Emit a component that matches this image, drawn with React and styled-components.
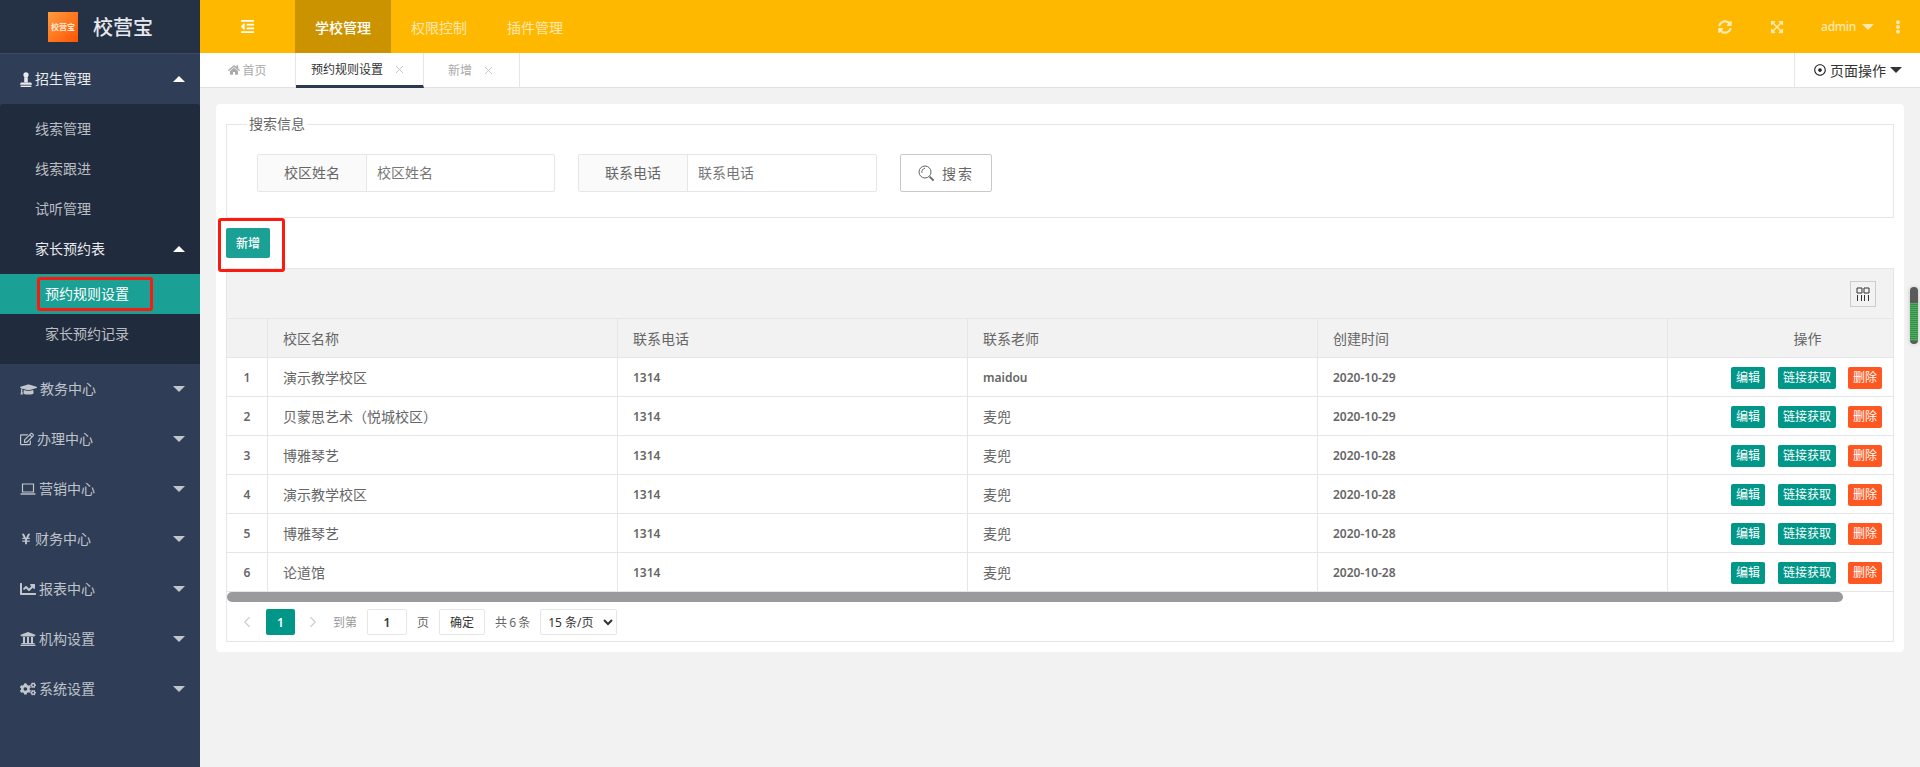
import React from 'react'
import styled, { createGlobalStyle } from 'styled-components'
import {
  FaHome, FaGraduationCap, FaRegEdit, FaYenSign, FaChartLine, FaUniversity, FaCogs,
  FaSyncAlt, FaExpandArrowsAlt, FaEllipsisV, FaRegDotCircle, FaOutdent
} from 'react-icons/fa'
import { X, ChevronLeft, ChevronRight } from 'lucide-react'

const GlobalStyle = createGlobalStyle`
  html, body, #root {
    height: 100%;
    margin: 0;
  }
  body {
    overflow: hidden;
    background: #f2f2f2;
    font-family: "Noto Sans", "Noto Sans CJK SC", sans-serif;
    color: #666;
  }
  * {
    box-sizing: border-box;
  }
`

const Page = styled.div`
  position: relative;
  display: flex;
  height: 100%;
`

const Sidebar = styled.aside`
  width: 200px;
  flex: none;
  background: #2f3e56;
`

const Brand = styled.div`
  display: flex;
  align-items: center;
  height: 54px;
  padding-left: 48px;
  background: #253145;
  border-bottom: 1px solid #3d4a5f;
`

const BrandLogo = styled.div`
  display: flex;
  align-items: center;
  justify-content: center;
  width: 30px;
  height: 30px;
  background: linear-gradient(135deg, #ff9c40, #ff5400);
  color: #ffe9d8;
  font-size: 8px;
  font-weight: 700;
  white-space: nowrap;
`

const BrandName = styled.div`
  margin-left: 15px;
  color: #e6e8ec;
  font-size: 20px;
  font-weight: 500;
`

const MenuRow = styled.div`
  display: flex;
  align-items: center;
  height: ${props => props.small ? 40 : 50}px;
  padding: 0 15px 2px ${props => props.small ? 35 : 20}px;
  color: ${props => props.open ? '#e8eaee' : 'rgba(255, 255, 255, .7)'};
  font-size: 14px;
`

const MenuIcon = styled.span`
  display: inline-flex;
  align-items: center;
  margin: 2px 3px 0 0;
  font-size: 15px;
`

const Caret = styled.span`
  margin-left: auto;
  width: 0;
  height: 0;
  border-left: 6px solid transparent;
  border-right: 6px solid transparent;
  border-top: ${props => props.up ? 0 : `6px solid ${props.color || 'rgba(255, 255, 255, .7)'}`};
  border-bottom: ${props => props.up ? `6px solid ${props.color || '#fff'}` : 0};
`

const MenuCaret = styled(Caret)`
  margin-top: 2px;
`

const SubMenu = styled.div`
  padding: 5px 0;
  background: #202b3d;
  border-radius: 3px 3px 0 0;
`

const SubSubMenu = styled.div`
  padding: 5px 0;
`

const SubSubItem = styled.div`
  position: relative;
  display: flex;
  align-items: center;
  height: 40px;
  padding: 0 0 2px 45px;
  font-size: 14px;
  background: ${props => props.active ? '#1aa094' : 'transparent'};
  color: ${props => props.active ? '#fff' : 'rgba(255, 255, 255, .7)'};
`

const Highlight = styled.span`
  position: absolute;
  border: 3px solid #fb1a10;
  border-radius: 3px;
  pointer-events: none;
`

const MenuMark = styled(Highlight)`
  left: 37px;
  top: 3px;
  width: 116px;
  height: 34px;
`

const AddMark = styled(Highlight)`
  left: -8px;
  top: -10px;
  width: 67px;
  height: 54px;
`

const Main = styled.main`
  flex: 1;
  min-width: 0;
  display: flex;
  flex-direction: column;
`

const TopBar = styled.header`
  display: flex;
  align-items: center;
  height: 53px;
  flex: none;
  background: #ffb800;
`

const Collapse = styled.div`
  display: flex;
  justify-content: center;
  width: 95px;
  color: #fff;
  font-size: 15px;
`

const TopLink = styled.div`
  display: flex;
  align-items: center;
  justify-content: center;
  width: 96px;
  height: 100%;
  font-size: 14px;
  font-weight: ${props => props.active ? 500 : 400};
  background: ${props => props.active ? '#cc9300' : 'transparent'};
  color: ${props => props.active ? '#fff' : 'rgba(255, 255, 255, .7)'};
`

const TopTools = styled.div`
  display: flex;
  align-items: center;
  margin-left: auto;
  color: rgba(255, 255, 255, .7);
`

const TopTool = styled.span`
  display: inline-flex;
  justify-content: center;
  width: ${props => props.width}px;
  font-size: 14px;
`

const UserName = styled.span`
  display: flex;
  align-items: center;
  gap: 6px;
  margin-left: auto;
  padding-right: 2px;
  font-size: 12px;
  font-weight: 500;
  letter-spacing: -.3px;
`

const TabBar = styled.div`
  display: flex;
  height: 35px;
  flex: none;
  background: #fff;
  border-bottom: 1px solid #e2e2e2;
`

const HomeTab = styled.div`
  display: flex;
  align-items: center;
  justify-content: center;
  gap: 2px;
  width: 96px;
  font-size: 12px;
  color: #aaa;
  border-right: 1px solid #e6e6e6;
`

const Tab = styled.div`
  display: flex;
  align-items: center;
  gap: 10px;
  margin-bottom: -1px;
  width: ${props => props.width}px;
  padding-left: ${props => props.active ? 15 : 24}px;
  font-size: 12px;
  color: ${props => props.active ? '#333' : '#aaa'};
  border-right: 1px solid #e6e6e6;
  border-bottom: ${props => props.active ? '3px solid #2b384e' : '1px solid #e2e2e2'};
  svg {
    color: #bbb;
  }
`

const PageAction = styled.div`
  display: flex;
  align-items: center;
  margin-left: auto;
  width: 126px;
  padding-left: 19px;
  font-size: 14px;
  color: #333;
  border-left: 1px solid #e6e6e6;
  svg {
    margin-right: 4px;
    color: #222;
  }
`

const ActionCaret = styled(Caret)`
  margin-left: 4px;
`

const Content = styled.div`
  padding: 16px 16px 0;
`

const Card = styled.section`
  padding: 10px;
  background: #fff;
  border-radius: 4px;
`

const Fieldset = styled.fieldset`
  margin: 0 0 10px;
  padding: 20px 30px 25px;
  border: 1px solid #e6e6e6;
`

const Legend = styled.legend`
  margin-left: -10px;
  padding: 0 2px;
  font-size: 14px;
  line-height: 20px;
  color: #666;
`

const SearchRow = styled.div`
  display: flex;
  align-items: center;
`

const InputGroup = styled.div`
  display: flex;
  width: ${props => props.width}px;
  height: 38px;
  margin-right: 23px;
  font-size: 14px;
  border: 1px solid #e6e6e6;
  border-radius: 2px;
`

const InputLabel = styled.div`
  display: flex;
  align-items: center;
  justify-content: center;
  width: 109px;
  padding-bottom: 2px;
  background: #fafafa;
  border-right: 1px solid #e6e6e6;
`

const InputValue = styled.div`
  display: flex;
  align-items: center;
  padding: 0 0 2px 10px;
  color: #777;
`

const SearchButton = styled.button`
  display: flex;
  align-items: center;
  justify-content: center;
  gap: 7px;
  width: 92px;
  height: 38px;
  padding: 0;
  font: inherit;
  font-size: 14px;
  letter-spacing: 2px;
  color: #666;
  background: #fff;
  border: 1px solid #c9c9c9;
  border-radius: 2px;
`

const AddRow = styled.div`
  position: relative;
  width: 44px;
  margin-bottom: 10px;
`

const AddButton = styled.button`
  display: block;
  width: 44px;
  height: 30px;
  padding: 0;
  font: inherit;
  font-size: 12px;
  font-weight: 500;
  color: #fff;
  background: #1aa094;
  border: 0;
  border-radius: 2px;
`

const Panel = styled.div`
  border: 1px solid #e6e6e6;
`

const PanelTools = styled.div`
  display: flex;
  align-items: center;
  justify-content: flex-end;
  height: 50px;
  padding-right: 17px;
  background: #f2f2f2;
  border-bottom: 1px solid #e6e6e6;
`

const ColsButton = styled.div`
  display: flex;
  align-items: center;
  justify-content: center;
  width: 26px;
  height: 26px;
  border: 1px solid #ccc;
`

const Table = styled.table`
  width: 1666px;
  table-layout: fixed;
  border-collapse: separate;
  border-spacing: 0;
`

const Th = styled.th`
  height: 39px;
  padding: ${props => props.center ? '0 0 0 54px' : '0 15px'};
  font-size: 14px;
  font-weight: 400;
  color: #666;
  text-align: ${props => props.center ? 'center' : 'left'};
  background: #f2f2f2;
  border-right: 1px solid #e6e6e6;
  border-bottom: 1px solid #e6e6e6;
  &:last-child {
    border-right: 0;
  }
`

const Td = styled.td`
  height: 39px;
  padding: 0 15px;
  font-size: ${props => props.strong ? 12 : 14}px;
  font-weight: ${props => props.strong ? 600 : 400};
  color: #666;
  text-align: ${props => props.center ? 'center' : 'left'};
  border-right: 1px solid #e6e6e6;
  border-bottom: 1px solid #e6e6e6;
  &:last-child {
    border-right: 0;
    padding: 0 11px 0 0;
  }
`

const RowActions = styled.div`
  display: flex;
  justify-content: flex-end;
  gap: 12px;
  padding-top: 2px;
`

const RowButton = styled.button`
  height: 22px;
  padding: 0 5px;
  font: inherit;
  font-size: 12px;
  line-height: 22px;
  color: #fff;
  background: ${props => props.danger ? '#ff5722' : '#009688'};
  border: 0;
  border-radius: 2px;
  &:first-child {
    margin-right: 1px;
  }
`

const ScrollTrack = styled.div`
  height: 10px;
  background: #fff;
`

const ScrollThumb = styled.div`
  width: 1616px;
  height: 100%;
  background: #9a9a9d;
  border-radius: 5px;
`

const Pager = styled.div`
  display: flex;
  align-items: center;
  height: 39px;
  padding: 1px 0 0 11px;
  font-size: 12px;
  color: #777;
`

const PagerArrow = styled.span`
  display: inline-flex;
  justify-content: center;
  width: 18px;
  color: #ccc;
`

const PagerCurrent = styled.span`
  display: flex;
  align-items: center;
  justify-content: center;
  width: 29px;
  height: 26px;
  margin: 0 9px 0 10px;
  font-weight: 600;
  color: #fff;
  background: #009688;
  border-radius: 2px;
`

const PagerText = styled.span`
  margin: ${props => props.margin || '0'};
  color: ${props => props.muted ? '#999' : '#666'};
  white-space: nowrap;
  word-spacing: -1px;
`

const PagerBox = styled.span`
  display: flex;
  align-items: center;
  justify-content: center;
  width: ${props => props.width}px;
  height: 26px;
  font-weight: ${props => props.strong ? 600 : 400};
  color: #333;
  border: 1px solid #e6e6e6;
  border-radius: 2px;
`

const PageSize = styled.select`
  width: 77px;
  height: 26px;
  padding: 0 0 0 3px;
  font: inherit;
  font-size: 12px;
  color: #333;
  background: #fff;
  border: 1px solid #e6e6e6;
  border-radius: 2px;
`

const PageScroll = styled.div`
  position: absolute;
  top: 287px;
  right: 2px;
  width: 8px;
  height: 57px;
  background:
    repeating-linear-gradient(#4cae5f 0 1px, #3c8a4c 1px 2px) 0 16px / 100% 38px no-repeat,
    #5a5a5a;
  border-radius: 4px;
  box-shadow: 0 0 4px rgba(0, 0, 0, .2);
`

const StampIcon = () => (
  <svg width='12' height='15' viewBox='0 0 12 15' fill='currentColor'>
    <circle cx='6' cy='2.8' r='2.6' />
    <path d='M4.2 5.2h3.6v5.3H4.2z' />
    <path d='M1.6 10.5h8.8c.8 0 1.4.6 1.4 1.4v.9H.2v-.9c0-.8.6-1.4 1.4-1.4z' />
    <path d='M.6 13.6h10.8V15H.6z' />
  </svg>
)

const LaptopIcon = () => (
  <svg width='16' height='12' viewBox='0 0 16 12' fill='none' stroke='currentColor' strokeWidth='1.2'>
    <path d='M2.5 1h11v8h-11z' />
    <path d='M.5 11h15' strokeWidth='1.4' />
  </svg>
)

const SearchIcon = () => (
  <svg width='17' height='17' viewBox='0 0 17 17' fill='none' stroke='#666' strokeWidth='1'>
    <circle cx='7' cy='7' r='6' />
    <path d='M7 3.2A3.8 3.8 0 0 0 4 8' />
    <path d='M11.6 11.6l4 4' strokeWidth='1.8' />
  </svg>
)

const ColsIcon = () => (
  <svg width='14' height='14' viewBox='0 0 14 14' fill='none' stroke='#333' strokeWidth='1'>
    <path d='M1 1h5v5H1zM8 1h5v5H8z' />
    <path d='M1.5 8v6M5.5 8v6M8.5 8v6M12.5 8v6' />
  </svg>
)

const menus = [
  { name: '教务中心', icon: <FaGraduationCap size={17} /> },
  { name: '办理中心', icon: <FaRegEdit size={14} /> },
  { name: '营销中心', icon: <LaptopIcon /> },
  { name: '财务中心', icon: <FaYenSign size={12} /> },
  { name: '报表中心', icon: <FaChartLine size={16} /> },
  { name: '机构设置', icon: <FaUniversity size={16} /> },
  { name: '系统设置', icon: <FaCogs size={16} /> }
]

const rows = [
  ['演示教学校区', '1314', 'maidou', '2020-10-29'],
  ['贝蒙思艺术（悦城校区）', '1314', '麦兜', '2020-10-29'],
  ['博雅琴艺', '1314', '麦兜', '2020-10-28'],
  ['演示教学校区', '1314', '麦兜', '2020-10-28'],
  ['博雅琴艺', '1314', '麦兜', '2020-10-28'],
  ['论道馆', '1314', '麦兜', '2020-10-28']
]

const App = () => (
  <Page>
    <GlobalStyle />
    <Sidebar>
      <Brand>
        <BrandLogo>校营宝</BrandLogo>
        <BrandName>校营宝</BrandName>
      </Brand>
      <MenuRow open>
        <MenuIcon><StampIcon /></MenuIcon>
        招生管理
        <MenuCaret up />
      </MenuRow>
      <SubMenu>
        <MenuRow small>线索管理</MenuRow>
        <MenuRow small>线索跟进</MenuRow>
        <MenuRow small>试听管理</MenuRow>
        <MenuRow small open>
          家长预约表
          <MenuCaret up />
        </MenuRow>
        <SubSubMenu>
          <SubSubItem active>
            预约规则设置
            <MenuMark />
          </SubSubItem>
          <SubSubItem>家长预约记录</SubSubItem>
        </SubSubMenu>
      </SubMenu>
      {menus.map(menu => (
        <MenuRow key={menu.name}>
          <MenuIcon>{menu.icon}</MenuIcon>
          {menu.name}
          <MenuCaret />
        </MenuRow>
      ))}
    </Sidebar>
    <Main>
      <TopBar>
        <Collapse><FaOutdent /></Collapse>
        <TopLink active>学校管理</TopLink>
        <TopLink>权限控制</TopLink>
        <TopLink>插件管理</TopLink>
        <TopTools>
          <TopTool width={52}><FaSyncAlt /></TopTool>
          <TopTool width={52}><FaExpandArrowsAlt /></TopTool>
          <TopTool width={73}>
            <UserName>admin <Caret color='rgba(255, 255, 255, .7)' /></UserName>
          </TopTool>
          <TopTool width={44}><FaEllipsisV /></TopTool>
        </TopTools>
      </TopBar>
      <TabBar>
        <HomeTab><FaHome size={12} />首页</HomeTab>
        <Tab active width={128}>预约规则设置<X size={13} strokeWidth={1.5} /></Tab>
        <Tab width={96}>新增<X size={13} strokeWidth={1.5} /></Tab>
        <PageAction>
          <FaRegDotCircle size={12} />
          页面操作
          <ActionCaret color='#333' />
        </PageAction>
      </TabBar>
      <Content>
        <Card>
          <Fieldset>
            <Legend>搜索信息</Legend>
            <SearchRow>
              <InputGroup width={298}>
                <InputLabel>校区姓名</InputLabel>
                <InputValue>校区姓名</InputValue>
              </InputGroup>
              <InputGroup width={299}>
                <InputLabel>联系电话</InputLabel>
                <InputValue>联系电话</InputValue>
              </InputGroup>
              <SearchButton><SearchIcon />搜索</SearchButton>
            </SearchRow>
          </Fieldset>
          <AddRow>
            <AddButton>新增</AddButton>
            <AddMark />
          </AddRow>
          <Panel>
            <PanelTools>
              <ColsButton><ColsIcon /></ColsButton>
            </PanelTools>
            <Table>
              <colgroup>
                <col width='41' />
                <col width='350' />
                <col width='350' />
                <col width='350' />
                <col width='350' />
                <col width='225' />
              </colgroup>
              <thead>
                <tr>
                  <Th />
                  <Th>校区名称</Th>
                  <Th>联系电话</Th>
                  <Th>联系老师</Th>
                  <Th>创建时间</Th>
                  <Th center>操作</Th>
                </tr>
              </thead>
              <tbody>
                {rows.map((row, i) => (
                  <tr key={i}>
                    <Td center strong>{i + 1}</Td>
                    <Td>{row[0]}</Td>
                    <Td strong>{row[1]}</Td>
                    <Td strong={row[2] === 'maidou'}>{row[2]}</Td>
                    <Td strong>{row[3]}</Td>
                    <Td>
                      <RowActions>
                        <RowButton>编辑</RowButton>
                        <RowButton>链接获取</RowButton>
                        <RowButton danger>删除</RowButton>
                      </RowActions>
                    </Td>
                  </tr>
                ))}
              </tbody>
            </Table>
            <ScrollTrack><ScrollThumb /></ScrollTrack>
            <Pager>
              <PagerArrow><ChevronLeft size={20} strokeWidth={1.5} /></PagerArrow>
              <PagerCurrent>1</PagerCurrent>
              <PagerArrow><ChevronRight size={20} strokeWidth={1.5} /></PagerArrow>
              <PagerText muted margin='0 10px 0 11px'>到第</PagerText>
              <PagerBox width={40} strong>1</PagerBox>
              <PagerText margin='0 10px'>页</PagerText>
              <PagerBox width={46}>确定</PagerBox>
              <PagerText margin='0 10px'>共 6 条</PagerText>
              <PageSize defaultValue='15'>
                <option value='15'>15 条/页</option>
              </PageSize>
            </Pager>
          </Panel>
        </Card>
      </Content>
    </Main>
    <PageScroll />
  </Page>
)

export default App
